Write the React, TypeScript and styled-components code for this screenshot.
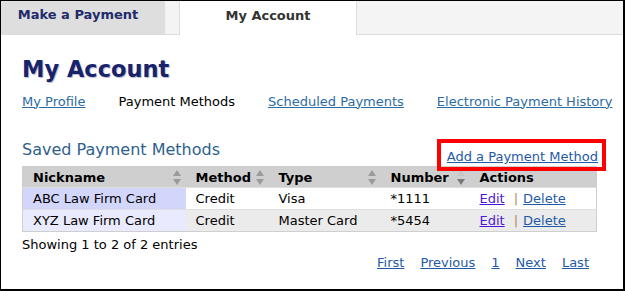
import styled, { createGlobalStyle } from "styled-components";

const GlobalStyle = createGlobalStyle`
  html, body {
    margin: 0;
    padding: 0;
    background: #fff;
  }
  body {
    font-family: "DejaVu Sans", Verdana, sans-serif;
    font-size: 13px;
    color: #000;
  }
`;

const Frame = styled.div`
  width: 625px;
  height: 291px;
  box-sizing: border-box;
  border-style: solid;
  border-color: #000;
  border-width: 1px 2px 2px 1px;
  overflow: hidden;
`;

const TabBar = styled.div`
  display: flex;
  height: 33px;
  background: #f4f4f4;
  border-bottom: 1px solid #dcdcdc;
`;

const Tab = styled.div<{ $active?: boolean }>`
  box-sizing: border-box;
  display: flex;
  justify-content: center;
  align-items: center;
  padding-bottom: 6px;
  padding-right: ${(p) => (p.$active ? "0" : "10px")};
  font-weight: bold;
  font-size: 13px;
  width: ${(p) => (p.$active ? "178px" : "164px")};
  height: ${(p) => (p.$active ? "34px" : "33px")};
  margin-left: ${(p) => (p.$active ? "14px" : "0")};
  background: ${(p) => (p.$active ? "#fff" : "#dedede")};
  color: ${(p) => (p.$active ? "#333" : "#1f2b6b")};
  border-left: ${(p) => (p.$active ? "1px solid #dcdcdc" : "none")};
  border-right: ${(p) => (p.$active ? "1px solid #dcdcdc" : "none")};
`;

const Content = styled.div`
  padding: 0 27px 0 21px;
`;

const Heading = styled.h1`
  margin: 20px 0 0;
  font-size: 22.5px;
  line-height: 28px;
  font-weight: bold;
  color: #17236b;
  text-shadow: 1px 1px 1px #b8b8c8;
`;

const SubNav = styled.nav`
  display: flex;
  align-items: center;
  margin-top: 9px;
  height: 18px;
`;

const NavLink = styled.a<{ $current?: boolean }>`
  color: ${(p) => (p.$current ? "#000" : "#2d6ca2")};
  text-decoration: ${(p) => (p.$current ? "none" : "underline")};
  white-space: nowrap;
`;

const NavSep = styled.span`
  width: 1px;
  height: 15px;
  background: #000;
  margin: 0 19px 0 14px;
`;

const SectionHead = styled.div`
  display: flex;
  justify-content: space-between;
  align-items: flex-end;
  margin-top: 28px;
  height: 28px;
`;

const SectionTitle = styled.h2`
  margin: 0 0 6px;
  font-size: 16px;
  font-weight: normal;
  color: #2f5f8f;
  line-height: 20px;
`;

const Highlight = styled.span`
  position: relative;
  margin-right: -2px;
  margin-bottom: 1px;
  line-height: 16px;
  &::after {
    content: "";
    position: absolute;
    left: -10px;
    right: -8px;
    top: -10px;
    bottom: -6px;
    border: 4px solid #f00;
    pointer-events: none;
  }
`;

const AddLink = styled.a`
  color: #1f5aa6;
  text-decoration: underline;
`;

const Table = styled.table`
  width: 574px;
  border-collapse: collapse;
  border: 1px solid #cfcfcf;
  table-layout: fixed;
`;

const Th = styled.th<{ $w: number }>`
  width: ${(p) => p.$w}px;
  height: 21px;
  padding: 0 0 0 10px;
  text-align: left;
  font-weight: bold;
  background: #cfcfcf;
  box-sizing: border-box;
`;

const HeadInner = styled.div`
  display: flex;
  align-items: center;
  justify-content: space-between;
  padding-right: 4px;
`;

const Td = styled.td<{ $bg: string }>`
  height: 21px;
  padding: 0 0 0 10px;
  background: ${(p) => p.$bg};
  white-space: nowrap;
`;

const Row = styled.tr`
  border-top: 1px solid #dedede;
`;

const EditLink = styled.a`
  color: #4b17d9;
  text-decoration: underline;
`;

const Pipe = styled.span`
  color: #a89060;
  margin: 0 5px 0 9px;
`;

const DeleteLink = styled.a`
  color: #1f5aa6;
  text-decoration: underline;
`;

const Info = styled.div`
  margin-top: 5px;
  line-height: 16px;
`;

const Pager = styled.div`
  display: flex;
  justify-content: flex-end;
  gap: 16px;
  padding-right: 7px;
  margin-top: 2px;
  width: 574px;
  box-sizing: border-box;
`;

const PageLink = styled.a`
  color: #1f5aa6;
  text-decoration: underline;
`;

function SortIcon({ state }: { state?: "desc" }) {
  return (
    <svg width="10" height="17" viewBox="0 0 10 17">
      <path d="M5 1 L9 7 L1 7 Z" fill={state === "desc" ? "#c6c6c6" : "#9a9a9a"} />
      <path d="M5 16 L9 10 L1 10 Z" fill={state === "desc" ? "#7a7a7a" : "#9a9a9a"} />
    </svg>
  );
}

const columns = [
  { label: "Nickname", w: 163, sort: true },
  { label: "Method", w: 83, sort: true },
  { label: "Type", w: 112, sort: true },
  { label: "Number", w: 89, sort: "desc" as const },
  { label: "Actions", w: 127, sort: false },
];

const rows = [
  { nick: "ABC Law Firm Card", method: "Credit", type: "Visa", num: "*1111" },
  { nick: "XYZ Law Firm Card", method: "Credit", type: "Master Card", num: "*5454" },
];

export default function App() {
  return (
    <>
      <GlobalStyle />
      <Frame>
        <TabBar>
          <Tab>Make a Payment</Tab>
          <Tab $active>My Account</Tab>
        </TabBar>
        <Content>
          <Heading>My Account</Heading>
          <SubNav>
            <NavLink href="#">My Profile</NavLink>
            <NavSep />
            <NavLink $current>Payment Methods</NavLink>
            <NavSep />
            <NavLink href="#">Scheduled Payments</NavLink>
            <NavSep />
            <NavLink href="#">Electronic Payment History</NavLink>
          </SubNav>
          <SectionHead>
            <SectionTitle>Saved Payment Methods</SectionTitle>
            <Highlight>
              <AddLink href="#">Add a Payment Method</AddLink>
            </Highlight>
          </SectionHead>
          <Table>
            <thead>
              <tr>
                {columns.map((c) => (
                  <Th key={c.label} $w={c.w}>
                    <HeadInner>
                      <span>{c.label}</span>
                      {c.sort && <SortIcon state={c.sort === "desc" ? "desc" : undefined} />}
                    </HeadInner>
                  </Th>
                ))}
              </tr>
            </thead>
            <tbody>
              {rows.map((r, i) => {
                const even = i % 2 === 1;
                const bg = even ? "#ebebeb" : "#fff";
                return (
                  <Row key={r.num}>
                    <Td $bg={even ? "#e9eafd" : "#d3d6fb"}>{r.nick}</Td>
                    <Td $bg={bg}>{r.method}</Td>
                    <Td $bg={bg}>{r.type}</Td>
                    <Td $bg={bg}>{r.num}</Td>
                    <Td $bg={bg}>
                      <EditLink href="#">Edit</EditLink>
                      <Pipe>|</Pipe>
                      <DeleteLink href="#">Delete</DeleteLink>
                    </Td>
                  </Row>
                );
              })}
            </tbody>
          </Table>
          <Info>Showing 1 to 2 of 2 entries</Info>
          <Pager>
            <PageLink href="#">First</PageLink>
            <PageLink href="#">Previous</PageLink>
            <PageLink href="#">1</PageLink>
            <PageLink href="#">Next</PageLink>
            <PageLink href="#">Last</PageLink>
          </Pager>
        </Content>
      </Frame>
    </>
  );
}
